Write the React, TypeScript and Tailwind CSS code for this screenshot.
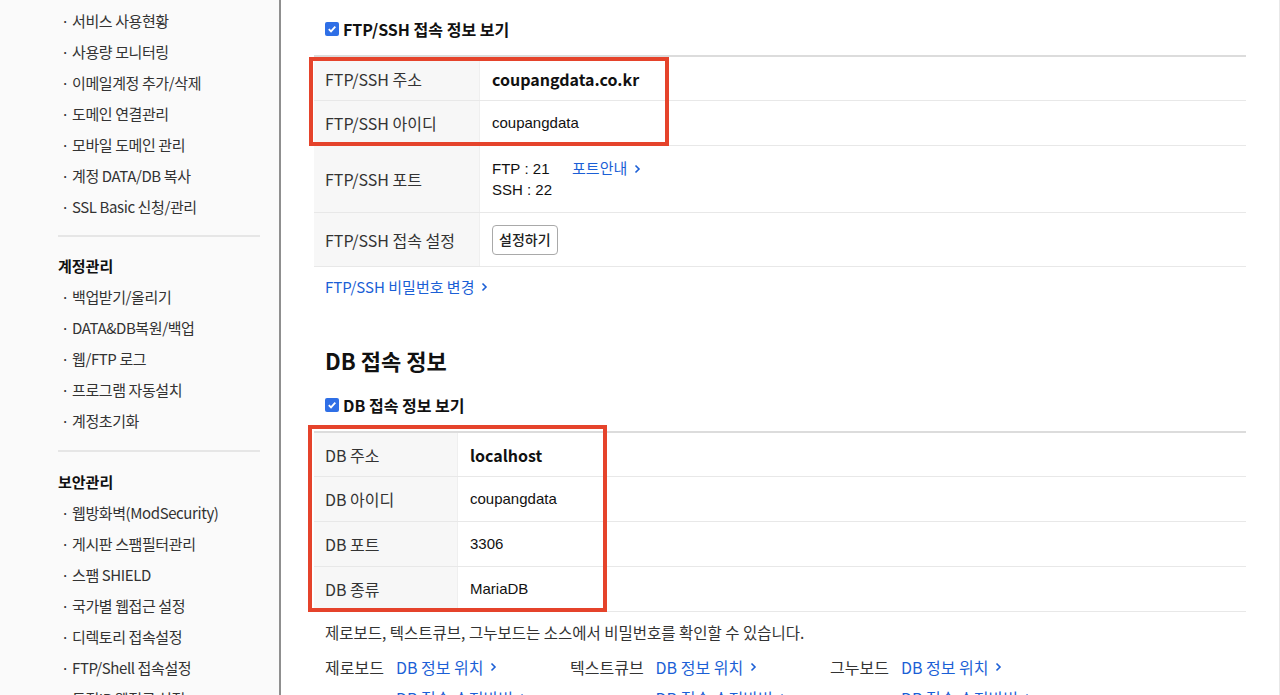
import React from "react";

const font = { fontFamily: '"Noto Sans CJK KR", "Noto Sans", sans-serif' };
const arial = { fontFamily: '"Liberation Sans", sans-serif' };

const serviceItems = [
  "서비스 사용현황",
  "사용량 모니터링",
  "이메일계정 추가/삭제",
  "도메인 연결관리",
  "모바일 도메인 관리",
  "계정 DATA/DB 복사",
  "SSL Basic 신청/관리",
];

const accountItems = ["백업받기/올리기", "DATA&DB복원/백업", "웹/FTP 로그", "프로그램 자동설치", "계정초기화"];

const securityItems = [
  "웹방화벽(ModSecurity)",
  "게시판 스팸필터관리",
  "스팸 SHIELD",
  "국가별 웹접근 설정",
  "디렉토리 접속설정",
  "FTP/Shell 접속설정",
  "특정IP 웹접근 설정",
];

function SideItem({ label }: { label: string }) {
  return (
    <li className="flex h-[31px] items-center text-[15px] tracking-[-0.4px] text-[#333]">
      <span className="w-[14px] pl-[3px]">·</span>
      <span>{label}</span>
    </li>
  );
}

function Chevron() {
  return (
    <svg width="7" height="10" viewBox="0 0 7 10" className="ml-[7px] inline-block">
      <path d="M1.5 1.5 L5 5 L1.5 8.5" fill="none" stroke="currentColor" strokeWidth="1.6" />
    </svg>
  );
}

function Check({ label }: { label: string }) {
  return (
    <label className="flex h-[22px] items-center gap-[4px] pl-[11px] text-[16px] font-bold text-[#111]">
      <span className="flex h-[14px] w-[14px] items-center justify-center rounded-[2px] bg-[#2f6fe6]">
        <svg width="10" height="10" viewBox="0 0 10 10">
          <path d="M1.8 5.2 L4 7.4 L8.3 2.6" fill="none" stroke="white" strokeWidth="1.8" />
        </svg>
      </span>
      {label}
    </label>
  );
}

function Row({
  label,
  labelW,
  h,
  children,
  top,
}: {
  label: string;
  labelW: string;
  h: string;
  children: React.ReactNode;
  top?: boolean;
}) {
  return (
    <div className={`flex border-b border-[#e8e8e8] ${h}`}>
      <div
        className={`flex border-r border-[#efefef] bg-[#f7f7f7] pl-[11px] text-[16px] text-[#333] ${labelW} ${
          top ? "items-start pt-[21px]" : "items-center"
        }`}
      >
        {label}
      </div>
      <div className="flex flex-1 items-center pl-[12px] text-[15px] text-[#111]">{children}</div>
    </div>
  );
}

export default function App() {
  return (
    <div className="flex h-[695px] w-[1280px] overflow-hidden bg-white" style={font}>
      <aside className="w-[281px] shrink-0 border-r-2 border-[#8f8f8f] bg-[#fafafa] pl-[58px] pt-[6px]">
        <div className="w-[202px]">
          <ul>
            {serviceItems.map((s) => (
              <SideItem key={s} label={s} />
            ))}
          </ul>
          <div className="mb-[13px] mt-[12px] h-[2px] bg-[#e6e6e6]" />
          <div className="flex h-[32px] items-center text-[15px] font-bold text-[#111]">계정관리</div>
          <ul>
            {accountItems.map((s) => (
              <SideItem key={s} label={s} />
            ))}
          </ul>
          <div className="mb-[14px] mt-[13px] h-[2px] bg-[#e6e6e6]" />
          <div className="flex h-[32px] items-center text-[15px] font-bold text-[#111]">보안관리</div>
          <ul>
            {securityItems.map((s) => (
              <SideItem key={s} label={s} />
            ))}
          </ul>
        </div>
      </aside>

      <main className="relative flex-1 border-r border-[#e8e8e8] pl-[33px] pr-[33px] pt-[18px]">
        <Check label="FTP/SSH 접속 정보 보기" />

        <div className="mt-[15px] border-t-2 border-[#dcdcdc]">
          <Row label="FTP/SSH 주소" labelW="w-[166px]" h="h-[44px]">
            <span className="text-[16px] font-bold">coupangdata.co.kr</span>
          </Row>
          <Row label="FTP/SSH 아이디" labelW="w-[166px]" h="h-[45px]">
            <span style={arial}>coupangdata</span>
          </Row>
          <Row label="FTP/SSH 포트" labelW="w-[166px]" h="h-[67px]" top>
            <div className="flex self-start pt-[12px]">
              <div className="flex flex-col leading-[21px]" style={arial}>
                <span>FTP&nbsp;:&nbsp;21</span>
                <span>SSH&nbsp;:&nbsp;22</span>
              </div>
              <a className="ml-[20px] flex h-[21px] items-center text-[#1b5fd6]">
                포트안내
                <Chevron />
              </a>
            </div>
          </Row>
          <Row label="FTP/SSH 접속 설정" labelW="w-[166px]" h="h-[54px]">
            <button className="h-[30px] rounded-[4px] border border-[#a9a9a9] bg-white px-[6px] text-[14px] font-medium text-[#222]">
              설정하기
            </button>
          </Row>
        </div>

        <a className="mt-[10px] flex h-[20px] items-center pl-[11px] text-[15px] text-[#1b5fd6]">
          FTP/SSH 비밀번호 변경
          <Chevron />
        </a>

        <h2 className="mt-[48px] flex h-[30px] items-center pl-[11px] text-[22px] font-bold text-[#111]">DB 접속 정보</h2>

        <div className="mt-[19px]">
          <Check label="DB 접속 정보 보기" />
        </div>

        <div className="mt-[15px] border-t-2 border-[#dcdcdc]">
          <Row label="DB 주소" labelW="w-[144px]" h="h-[44px]">
            <span className="text-[16px] font-bold">localhost</span>
          </Row>
          <Row label="DB 아이디" labelW="w-[144px]" h="h-[45px]">
            <span style={arial}>coupangdata</span>
          </Row>
          <Row label="DB 포트" labelW="w-[144px]" h="h-[45px]">
            <span style={arial}>3306</span>
          </Row>
          <Row label="DB 종류" labelW="w-[144px]" h="h-[45px]">
            <span style={arial}>MariaDB</span>
          </Row>
        </div>

        <p className="mt-[11px] flex h-[20px] items-center pl-[11px] text-[15.5px] text-[#333]">
          제로보드, 텍스트큐브, 그누보드는 소스에서 비밀번호를 확인할 수 있습니다.
        </p>

        <div className="mt-[14px] flex pl-[11px] text-[16px]">
          {[
            { name: "제로보드", w: "w-[245px]" },
            { name: "텍스트큐브", w: "w-[260px]" },
            { name: "그누보드", w: "w-[260px]" },
          ].map((g) => (
            <div key={g.name} className={`flex ${g.w}`}>
              <span className="mr-[12px] h-[20px] leading-[20px] text-[#333]">{g.name}</span>
              <div className="flex flex-col gap-[11px]">
                <a className="flex h-[20px] items-center text-[#1b5fd6]">
                  DB 정보 위치
                  <Chevron />
                </a>
                <a className="flex h-[20px] items-center text-[#1b5fd6]">
                  DB 접속 수정방법
                  <Chevron />
                </a>
              </div>
            </div>
          ))}
        </div>

        <div className="pointer-events-none absolute left-[28px] top-[57px] h-[89px] w-[360px] border-[4px] border-[#e5432b]" />
        <div className="pointer-events-none absolute left-[27px] top-[425px] h-[187px] w-[299px] border-[4px] border-[#e5432b]" />
      </main>
    </div>
  );
}
